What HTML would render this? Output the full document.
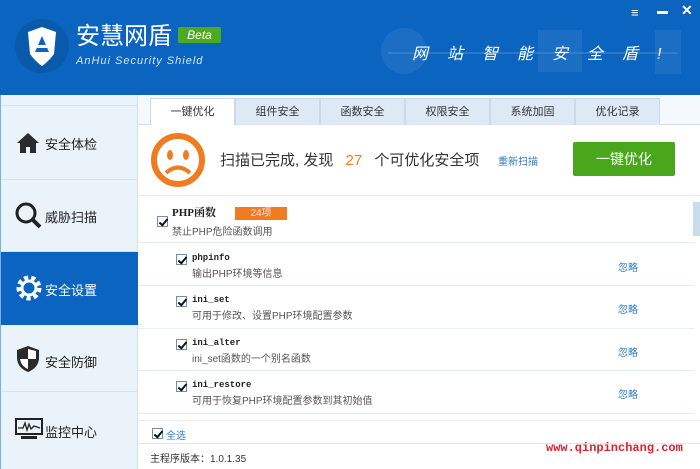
<!DOCTYPE html>
<html><head><meta charset="utf-8"><style>
*{margin:0;padding:0;box-sizing:border-box}
body{width:700px;height:469px;overflow:hidden;background:#fff;font-family:"Liberation Sans","Noto Sans CJK SC",sans-serif;position:relative;font-size:12px;color:#333}
.hdr{position:absolute;left:0;top:0;width:700px;height:95px;background:#0b64c0}
.abs{position:absolute}
.side{position:absolute;left:0;top:95px;width:138px;height:374px;background:#eaf3fa;border-left:1px solid #7fb0dc;border-right:1px solid #d0e0ee}
.item{position:absolute;left:0;width:137px;border-bottom:1px solid #d6e4ef;font-size:13px;color:#222}
.item span{position:absolute;left:44px}
.tabs{position:absolute;left:138px;top:95px;width:562px;height:30px;background:#f4f9fd;border-bottom:1px solid #cfdfec}
.tab{position:absolute;top:3px;height:27px;width:85px;background:#dde9f4;border:1px solid #c9dbea;border-bottom:none;text-align:center;line-height:26px;font-size:11px;color:#333}
.tab.on{background:#fff}
.row{position:absolute;left:138px;width:556px;border-bottom:1px solid #e4edf4}
.cb{position:absolute;width:11px;height:11px;border:1px solid #6b8fb0;background:#fff}
.cb:after{content:"";position:absolute;left:3px;top:0px;width:3px;height:7px;border:solid #111;border-width:0 2px 2px 0;transform:rotate(40deg)}
.fn{position:absolute;left:192px;font-family:"Liberation Mono",monospace;font-size:9px;font-weight:bold;color:#222}
.ds{position:absolute;left:192px;font-size:10px;color:#555}
.ig{position:absolute;left:618px;font-size:10px;color:#2b7bc8}
</style></head><body>
<div class="hdr"></div>
<svg class="abs" style="left:14px;top:18px" width="56" height="56" viewBox="0 0 56 56"><circle cx="28" cy="28" r="27" fill="#0a5aab"/><path d="M28 9 L42 14 L40 36 Q34 44 28 48 Q22 44 16 36 L14 14 Z" fill="#fff"/><path d="M28 18 L21 34 H35 Z" fill="#0b64c0"/><rect x="23" y="27" width="10" height="3" fill="#fff"/></svg>
<div class="abs" style="left:76px;top:22px;font-size:24px;color:#fff;line-height:30px">安慧网盾</div>
<div class="abs" style="left:178px;top:27px;width:43px;height:16px;background:#4caa1e;border-radius:2px;color:#fff;font-style:italic;font-size:12px;text-align:center;line-height:16px">Beta</div>
<div class="abs" style="left:76px;top:55px;font-size:11px;color:#d6e6f7;font-style:italic;letter-spacing:1px">AnHui Security Shield</div>
<svg class="abs" style="left:378px;top:28px" width="310" height="50"><circle cx="26" cy="23" r="23" fill="#3a82cc" opacity=".35"/><rect x="160" y="2" width="44" height="42" fill="#3a82cc" opacity=".35"/><rect x="277" y="2" width="26" height="44" fill="#3a82cc" opacity=".35"/><line x1="10" y1="25" x2="300" y2="25" stroke="#4a8ed2" stroke-width="1"/></svg>
<div class="abs" style="left:412px;top:40px;font-size:16px;color:#fff;font-style:italic;letter-spacing:19px">网站智能安全盾!</div>
<div class="abs" style="left:631px;top:5px;color:#fff;font-size:13px;font-weight:bold">≡</div>
<div class="abs" style="left:657px;top:11px;width:11px;height:3px;background:#fff"></div>
<div class="abs" style="left:681px;top:2px;color:#fff;font-size:14px;font-weight:bold">✕</div>

<div class="side">
<div class="item" style="top:10px;height:75px;border-top:1px solid #d6e4ef"><svg class="abs" style="left:15px;top:26px" width="24" height="22"><path d="M12 1 L1 11 H4 V21 H10 V15 H14 V21 H20 V11 H23 Z" fill="#2b2b2b"/></svg><span style="top:28px">安全体检</span></div>
<div class="item" style="top:85px;height:72px"><svg class="abs" style="left:14px;top:22px" width="28" height="28"><circle cx="11" cy="11" r="9" fill="none" stroke="#222" stroke-width="3"/><line x1="17" y1="17" x2="25" y2="25" stroke="#222" stroke-width="4"/></svg><span style="top:27px">威胁扫描</span></div>
<div class="item" style="top:157px;height:73px;background:#0b64c0;color:#fff;border:none"><svg class="abs" style="left:15px;top:23px" width="26" height="26"><circle cx="13" cy="13" r="10" fill="none" stroke="#fff" stroke-width="5" stroke-dasharray="4 3"/><circle cx="13" cy="13" r="7" fill="none" stroke="#fff" stroke-width="3"/></svg><span style="top:28px">安全设置</span><div class="abs" style="left:129px;top:28px;width:0;height:0;border:8px solid transparent;border-right-color:#fff"></div></div>
<div class="item" style="top:230px;height:67px"><svg class="abs" style="left:15px;top:20px" width="24" height="28"><path d="M12 1 L23 5 V14 Q22 23 12 27 Q2 23 1 14 V5 Z" fill="#2a2a2a"/><path d="M12 4 V14 H20 V6 Z M12 14 H4 Q5 21 12 24 Z" fill="#fff"/></svg><span style="top:27px">安全防御</span></div>
<div class="item" style="top:297px;height:77px;border:none"><svg class="abs" style="left:14px;top:26px" width="28" height="22"><rect x="1" y="1" width="26" height="15" fill="none" stroke="#222" stroke-width="2"/><path d="M3 10 L8 10 L10 5 L12 12 L14 6 L16 11 L19 8 L25 10" fill="none" stroke="#222" stroke-width="1.3"/><rect x="6" y="18" width="16" height="3" fill="#222"/></svg><span style="top:30px">监控中心</span></div>
</div>

<div class="tabs">
<div class="tab on" style="left:12px">一键优化</div><div class="tab" style="left:97px">组件安全</div><div class="tab" style="left:182px">函数安全</div><div class="tab" style="left:267px">权限安全</div><div class="tab" style="left:352px">系统加固</div><div class="tab" style="left:437px">优化记录</div>
</div>
<svg class="abs" style="left:150px;top:132px" width="56" height="56"><circle cx="28" cy="28" r="24" fill="#fff" stroke="#f07c22" stroke-width="6"/><ellipse cx="20" cy="23" rx="3" ry="5" fill="#f07c22"/><ellipse cx="36" cy="23" rx="3" ry="5" fill="#f07c22"/><path d="M16 41 Q28 30 40 41" fill="none" stroke="#f07c22" stroke-width="4"/></svg>
<div class="abs" style="left:220px;top:149px;font-size:15px;color:#333">扫描已完成, 发现 <span style="color:#f07c22;margin:0 8px">27</span> 个可优化安全项</div>
<div class="abs" style="left:498px;top:153px;font-size:10px;color:#2b7bc8">重新扫描</div>
<div class="abs" style="left:573px;top:142px;width:102px;height:34px;background:#4aa71c;border-radius:2px;color:#fff;font-size:14px;text-align:center;line-height:34px">一键优化</div>
<div class="abs" style="left:138px;top:195px;width:562px;border-top:1px solid #e2ecf4"></div>

<div class="row" style="top:196px;height:47px"></div>
<div class="cb" style="left:157px;top:216px"></div>
<div class="abs" style="left:172px;top:204px;font-family:'Liberation Serif','Noto Serif CJK SC',serif;font-weight:bold;font-size:11px;color:#222">PHP函数</div>
<div class="abs" style="left:235px;top:207px;width:52px;height:13px;background:#f07c22;color:#fde;font-size:10px;text-align:center;line-height:13px">24项</div>
<div class="abs" style="left:172px;top:223px;font-size:10px;color:#555">禁止PHP危险函数调用</div>
<div class="abs" style="left:693px;top:202px;width:7px;height:34px;background:#c9dcee"></div>

<div class="row" style="top:243px;height:43px"></div>
<div class="cb" style="left:176px;top:254px"></div><div class="fn" style="top:253px">phpinfo</div><div class="ds" style="top:265px">输出PHP环境等信息</div><div class="ig" style="top:259px">忽略</div>
<div class="row" style="top:286px;height:43px"></div>
<div class="cb" style="left:176px;top:296px"></div><div class="fn" style="top:295px">ini_set</div><div class="ds" style="top:307px">可用于修改、设置PHP环境配置参数</div><div class="ig" style="top:301px">忽略</div>
<div class="row" style="top:329px;height:42px"></div>
<div class="cb" style="left:176px;top:339px"></div><div class="fn" style="top:338px">ini_alter</div><div class="ds" style="top:350px">ini_set函数的一个别名函数</div><div class="ig" style="top:344px">忽略</div>
<div class="row" style="top:371px;height:43px"></div>
<div class="cb" style="left:176px;top:381px"></div><div class="fn" style="top:380px">ini_restore</div><div class="ds" style="top:392px">可用于恢复PHP环境配置参数到其初始值</div><div class="ig" style="top:386px">忽略</div>

<div class="abs" style="left:138px;top:420px;width:562px;border-top:1px solid #e6eef5"></div>
<div class="cb" style="left:152px;top:428px"></div>
<div class="abs" style="left:166px;top:427px;font-size:10px;color:#2b7bc8">全选</div>
<div class="abs" style="left:138px;top:443px;width:562px;border-top:1px solid #e0e8ef"></div>
<div class="abs" style="left:150px;top:450px;font-size:10px;color:#333">主程序版本：1.0.1.35</div>
<div class="abs" style="left:546px;top:441px;font-family:'Liberation Mono',monospace;font-size:12px;font-weight:bold;color:#e0202a">www.qinpinchang.com</div>
</body></html>
